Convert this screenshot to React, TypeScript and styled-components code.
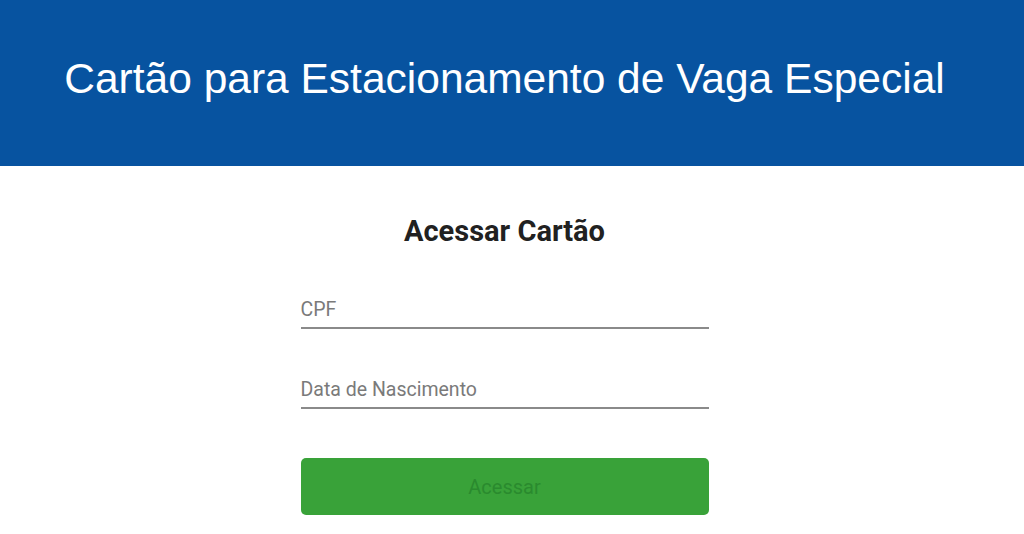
import React from "react";
import styled, { createGlobalStyle } from "styled-components";

const Global = createGlobalStyle`
  html, body { margin: 0; padding: 0; background: #ffffff; }
  * { box-sizing: border-box; }
`;

const Page = styled.div`
  display: flex;
  flex-direction: column;
  min-height: 534px;
  padding-right: 15px;
`;

const Header = styled.header`
  background: #0753a0;
  height: 166px;
  margin-right: -15px;
  padding-right: 15px;
  display: flex;
  align-items: center;
  justify-content: center;
`;

const Title = styled.h1`
  margin: 0;
  font-family: "Liberation Sans", Arial, sans-serif;
  font-weight: 400;
  font-size: 42.5px;
  color: #ffffff;
  padding-bottom: 8px;
`;

const Main = styled.main`
  display: flex;
  flex-direction: column;
  align-items: center;
  padding-top: 48px;
`;

const Heading = styled.h2`
  margin: 0 0 44px;
  font-family: Roboto, sans-serif;
  font-weight: 700;
  font-size: 29px;
  color: #212121;
`;

const Form = styled.form`
  width: 408px;
  display: flex;
  flex-direction: column;
`;

const Field = styled.label<{ gap: number }>`
  display: flex;
  align-items: flex-end;
  height: 37px;
  padding-bottom: 6px;
  border-bottom: 2px solid #8a8a8a;
  margin-bottom: ${(p) => p.gap}px;
  font-family: Roboto, sans-serif;
  font-size: 19.5px;
  color: #7a7a7a;
`;

const Button = styled.button`
  height: 57px;
  border: none;
  border-radius: 5px;
  background: #39a239;
  color: #2a8a2e;
  font-family: Roboto, sans-serif;
  font-size: 20px;
  cursor: default;
`;

export default function App() {
  return (
    <>
      <Global />
      <Page>
        <Header>
          <Title>Cartão para Estacionamento de Vaga Especial</Title>
        </Header>
        <Main>
          <Heading>Acessar Cartão</Heading>
          <Form>
            <Field gap={43}>CPF</Field>
            <Field gap={49}>Data de Nascimento</Field>
            <Button type="button">Acessar</Button>
          </Form>
        </Main>
      </Page>
    </>
  );
}
